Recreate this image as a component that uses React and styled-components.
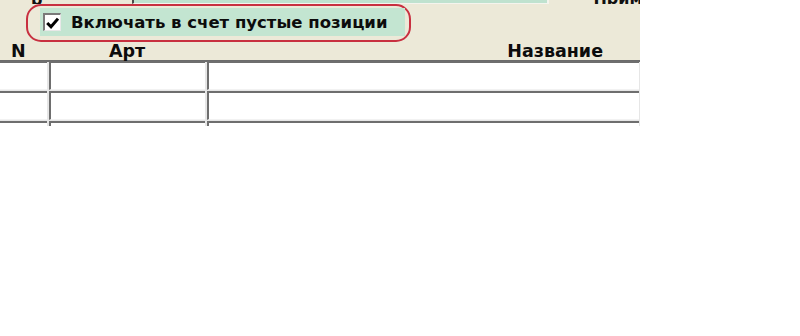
import React from "react";
import styled, { createGlobalStyle } from "styled-components";

const Global = createGlobalStyle`
  html, body { margin: 0; padding: 0; background: #ffffff; }
  body { font-family: "DejaVu Sans", Verdana, sans-serif; }
`;

const Page = styled.div`
  width: 800px;
  height: 336px;
  background: #ffffff;
  overflow: hidden;
`;

const Panel = styled.div`
  width: 640px;
  height: 126px;
  background: #ece9d8;
  overflow: hidden;
`;

const TopStrip = styled.div`
  height: 4px;
  display: flex;
  align-items: flex-end;
  overflow: hidden;
`;

const CutText = styled.span`
  flex: none;
  font-weight: bold;
  font-size: 16px;
  line-height: 16px;
  color: #111;
  margin-left: ${(p) => p.$left}px;
  margin-bottom: ${(p) => p.$drop}px;
`;

const GreenField = styled.div`
  flex: none;
  width: 413px;
  height: 20px;
  margin-left: ${(p) => p.$left}px;
  background: #bfe2cf;
  border-left: 2px solid #4a4a4a;
  border-right: 2px solid #f4f4ee;
  border-bottom: 1px solid #f4f4ee;
`;

const CheckRow = styled.div`
  height: 38px;
  padding-left: 26px;
  display: flex;
`;

const Oval = styled.div`
  box-sizing: border-box;
  width: 385px;
  height: 38px;
  border: 2px solid #c83040;
  border-radius: 15px;
  display: flex;
  align-items: center;
  padding-left: 12px;
  padding-right: 4px;
`;

const GreenBar = styled.label`
  flex: 1;
  height: 28px;
  margin-top: -2px;
  background: #c3e5d1;
  display: flex;
  align-items: center;
  padding-left: 3px;
  gap: 10px;
`;

const Box = styled.span`
  box-sizing: border-box;
  width: 18px;
  height: 18px;
  background: #ffffff;
  border-top: 2px solid #7a7a7a;
  border-left: 2px solid #7a7a7a;
  border-right: 1px solid #e8e8e8;
  border-bottom: 1px solid #e8e8e8;
  display: flex;
  align-items: center;
  justify-content: center;
`;

const LabelText = styled.span`
  font-weight: bold;
  font-size: 16.5px;
  color: #0c0c0c;
  white-space: nowrap;
`;

const cols = "47px 156px 432px";

const Header = styled.div`
  height: 18px;
  display: grid;
  grid-template-columns: ${cols};
  column-gap: 2px;
  align-items: center;
  border-bottom: 2px solid #6b6b6b;
  font-weight: bold;
  font-size: 17.5px;
  color: #0c0c0c;
`;

const HeadCell = styled.div`
  text-align: ${(p) => p.$align};
  padding-left: ${(p) => p.$pl || 0}px;
  padding-right: ${(p) => p.$pr || 0}px;
  line-height: 18px;
  white-space: nowrap;
`;

const Rows = styled.div`
  display: flex;
  flex-direction: column;
  gap: 1px;
  background: #e6e6e6;
`;

const Row = styled.div`
  display: grid;
  grid-template-columns: ${cols};
  column-gap: 2px;
  height: 29px;
  margin-top: ${(p) => (p.$first ? -1 : 0)}px;
`;

const Cell = styled.div`
  box-sizing: border-box;
  background: #ffffff;
  border-top: 2px solid #6e6e6e;
  border-left: ${(p) => (p.$edge ? "none" : "2px solid #6e6e6e")};
  border-bottom: 1px solid #f2f2f2;
`;

function Check() {
  return (
    <svg width="13" height="12" viewBox="0 0 13 12">
      <path d="M1.2 6 L5 9.8 L12 1.6" fill="none" stroke="#000" strokeWidth="3" />
    </svg>
  );
}

export default function App() {
  const rows = [0, 1, 2];
  return (
    <Page>
      <Global />
      <Panel>
        <TopStrip>
          <CutText $left={31} $drop={-4}>р</CutText>
          <GreenField $left={90} />
          <CutText $left={44} $drop={-3}>Прим</CutText>
        </TopStrip>
        <CheckRow>
          <Oval>
            <GreenBar>
              <Box>
                <Check />
              </Box>
              <LabelText>Включать в счет пустые позиции</LabelText>
            </GreenBar>
          </Oval>
        </CheckRow>
        <Header>
          <HeadCell $align="left" $pl={11}>N</HeadCell>
          <HeadCell $align="center">Арт</HeadCell>
          <HeadCell $align="right" $pr={36}>Название</HeadCell>
        </Header>
        <Rows>
          {rows.map((r) => (
            <Row key={r} $first={r === 0}>
              <Cell $edge />
              <Cell />
              <Cell />
            </Row>
          ))}
        </Rows>
      </Panel>
    </Page>
  );
}
